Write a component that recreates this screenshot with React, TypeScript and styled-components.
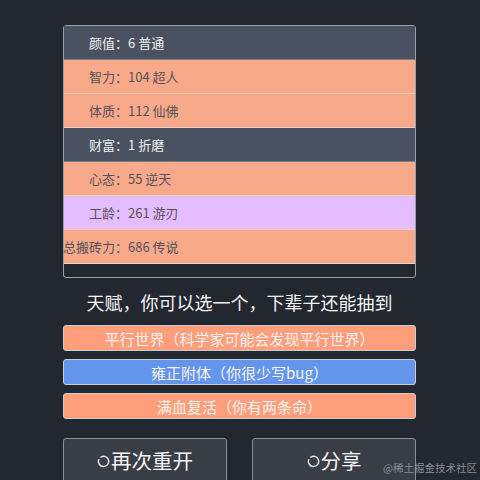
import React from 'react';
import styled, { createGlobalStyle } from 'styled-components';

const GlobalStyle = createGlobalStyle`
  html, body {
    margin: 0;
    padding: 0;
    background: #222730;
    font-family: "Noto Sans CJK SC", "Noto Sans", sans-serif;
  }
`;

type Tone = 'dark' | 'orange' | 'purple';

interface Prop {
  label: string;
  value: string;
  tone: Tone;
}

interface Talent {
  name: string;
  note: string;
  tone: 'orange' | 'blue';
}

const props: Prop[] = [
  { label: '颜值：', value: '6 普通', tone: 'dark' },
  { label: '智力：', value: '104 超人', tone: 'orange' },
  { label: '体质：', value: '112 仙佛', tone: 'orange' },
  { label: '财富：', value: '1 折磨', tone: 'dark' },
  { label: '心态：', value: '55 逆天', tone: 'orange' },
  { label: '工龄：', value: '261 游刃', tone: 'purple' },
  { label: '总搬砖力：', value: '686 传说', tone: 'orange' },
];

const talents: Talent[] = [
  { name: '平行世界', note: '（科学家可能会发现平行世界）', tone: 'orange' },
  { name: '雍正附体', note: '（你很少写bug）', tone: 'blue' },
  { name: '满血复活', note: '（你有两条命）', tone: 'orange' },
];

const rowBg: Record<Tone, string> = {
  dark: '#4a5160',
  orange: '#f8a98a',
  purple: '#e5bcff',
};

const Page = styled.div`
  width: 480px;
  height: 480px;
  overflow: hidden;
  position: relative;
  box-sizing: border-box;
  padding: 25px 64px 0 63px;
  display: flex;
  flex-direction: column;
`;

const Panel = styled.div`
  border: 1px solid #9aa0aa;
  border-radius: 3px;
  padding-bottom: 13px;
  display: flex;
  flex-direction: column;
`;

const Row = styled.div<{ $tone: Tone }>`
  height: 33px;
  display: flex;
  align-items: center;
  background: ${(p) => rowBg[p.$tone]};
  border-bottom: 1px solid ${(p) => (p.$tone === 'dark' ? '#7d838e' : '#f3cdbd')};
  color: ${(p) => (p.$tone === 'dark' ? '#eef0f2' : '#55535a')};
  font-size: 13px;
  white-space: nowrap;
`;

const Label = styled.span`
  width: 64px;
  text-align: right;
  flex-shrink: 0;
  display: flex;
  justify-content: flex-end;
`;

const Title = styled.div`
  margin: 12px 0 11px;
  text-align: center;
  color: #f2f3f5;
  font-size: 18px;
  line-height: 24px;
`;

const TalentList = styled.div`
  display: flex;
  flex-direction: column;
  gap: 8px;
`;

const TalentItem = styled.div<{ $tone: 'orange' | 'blue' }>`
  height: 24px;
  border: 1px solid #c9ccd2;
  border-radius: 3px;
  background: ${(p) => (p.$tone === 'blue' ? '#6495ed' : '#ff9e7b')};
  color: #f6f2ef;
  font-size: 15px;
  display: flex;
  align-items: center;
  justify-content: center;
  white-space: nowrap;
`;

const Actions = styled.div`
  margin-top: 19px;
  display: flex;
  justify-content: space-between;
`;

const ActionButton = styled.button`
  width: 164px;
  height: 46px;
  box-sizing: border-box;
  border: 1px solid #8b8f97;
  border-radius: 3px;
  background: #393d46;
  color: #f3f4f6;
  font-family: inherit;
  font-size: 20.5px;
  display: flex;
  align-items: center;
  justify-content: center;
  padding: 0;
  padding-bottom: 2px;
`;

const Spinner = styled.svg`
  width: 13px;
  height: 13px;
  margin-right: 1px;
  margin-top: 2px;
`;

const Watermark = styled.div`
  position: absolute;
  right: 3px;
  bottom: 5px;
  font-size: 10.5px;
  color: #8a8e96;
`;

function Reload(): React.ReactElement {
  return (
    <Spinner viewBox="0 0 14 14" fill="none">
      <path d="M4.2 2.2 A5.5 5.5 0 1 1 1.9 5" stroke="#e8e9ec" strokeWidth="1.6" strokeLinecap="round" />
    </Spinner>
  );
}

export default function App(): React.ReactElement {
  return (
    <>
      <GlobalStyle />
      <Page>
        <Panel>
          {props.map((p) => (
            <Row key={p.label} $tone={p.tone}>
              <Label>{p.label}</Label>
              <span>{p.value}</span>
            </Row>
          ))}
        </Panel>
        <Title>天赋，你可以选一个，下辈子还能抽到</Title>
        <TalentList>
          {talents.map((t) => (
            <TalentItem key={t.name} $tone={t.tone}>
              {t.name}
              {t.note}
            </TalentItem>
          ))}
        </TalentList>
        <Actions>
          <ActionButton>
            <Reload />
            再次重开
          </ActionButton>
          <ActionButton>
            <Reload />
            分享
          </ActionButton>
        </Actions>
        <Watermark>@稀土掘金技术社区</Watermark>
      </Page>
    </>
  );
}
